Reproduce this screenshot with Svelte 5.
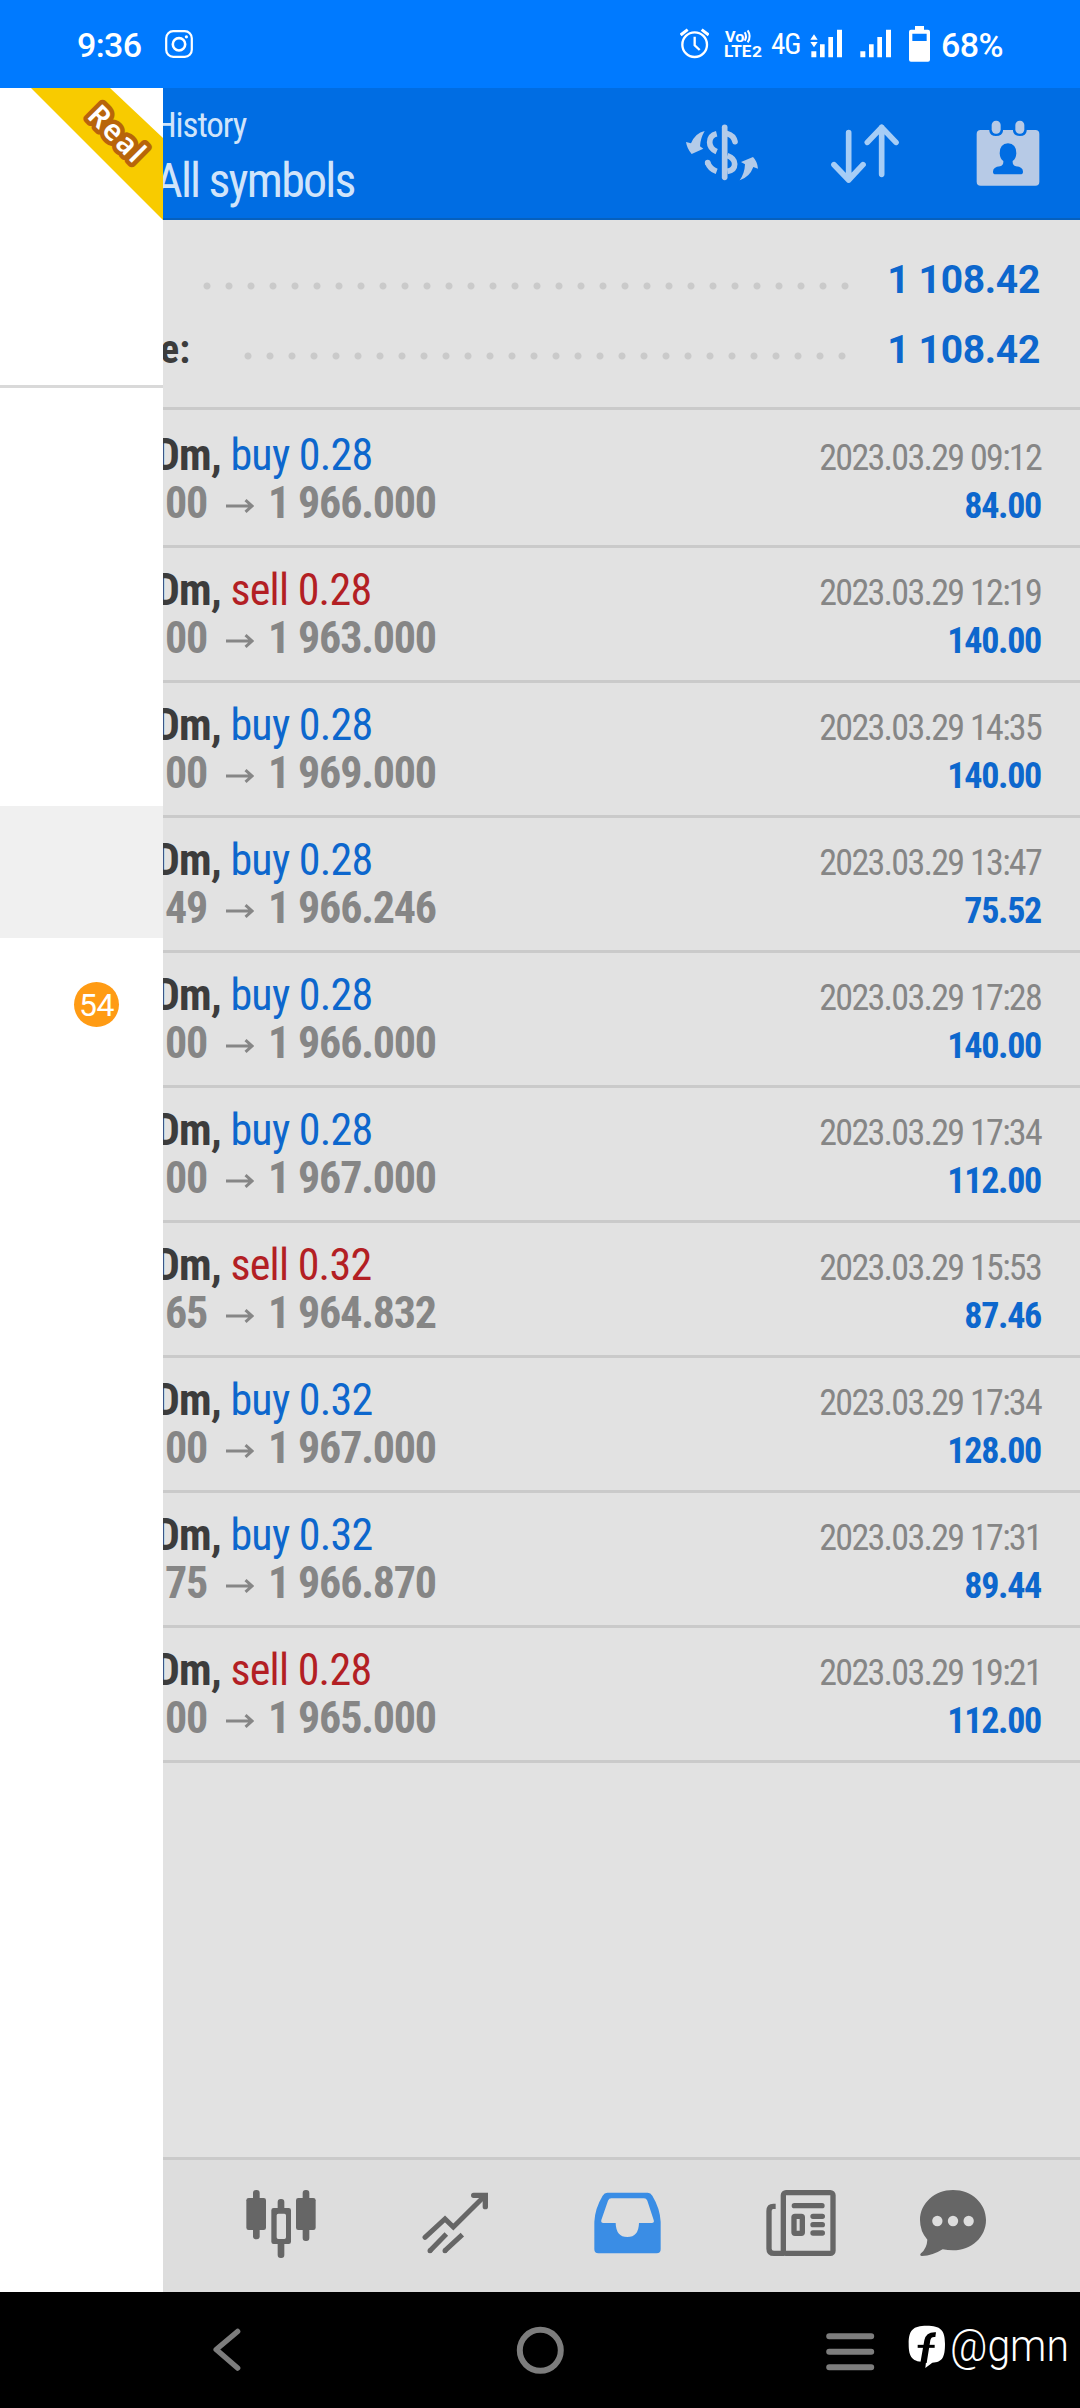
<script>
const deals = [
    { side: "buy", volume: "0.28", open: "00", close: "1 966.000", time: "2023.03.29 09:12", profit: "84.00" },
    { side: "sell", volume: "0.28", open: "00", close: "1 963.000", time: "2023.03.29 12:19", profit: "140.00" },
    { side: "buy", volume: "0.28", open: "00", close: "1 969.000", time: "2023.03.29 14:35", profit: "140.00" },
    { side: "buy", volume: "0.28", open: "49", close: "1 966.246", time: "2023.03.29 13:47", profit: "75.52" },
    { side: "buy", volume: "0.28", open: "00", close: "1 966.000", time: "2023.03.29 17:28", profit: "140.00" },
    { side: "buy", volume: "0.28", open: "00", close: "1 967.000", time: "2023.03.29 17:34", profit: "112.00" },
    { side: "sell", volume: "0.32", open: "65", close: "1 964.832", time: "2023.03.29 15:53", profit: "87.46" },
    { side: "buy", volume: "0.32", open: "00", close: "1 967.000", time: "2023.03.29 17:34", profit: "128.00" },
    { side: "buy", volume: "0.32", open: "75", close: "1 966.870", time: "2023.03.29 17:31", profit: "89.44" },
    { side: "sell", volume: "0.28", open: "00", close: "1 965.000", time: "2023.03.29 19:21", profit: "112.00" },
];
</script>

<div class="screen">
    <div class="status">
        <span class="clock">9:36</span>
        <svg class="insta" viewBox="0 0 28 28" fill="none" stroke="#fff">
            <rect x="1.2" y="1.2" width="25.6" height="25.6" rx="7" stroke-width="2.2" />
            <circle cx="14" cy="14.3" r="6.2" stroke-width="2.6" />
            <circle cx="21.4" cy="6.8" r="1.6" fill="#fff" stroke="none" />
        </svg>
        <svg class="alarm" viewBox="120 78 87 108" fill="none" stroke="#fff" stroke-width="7">
            <circle cx="164" cy="134" r="37" />
            <path d="M164 110V136L179 150" />
            <path d="M122 105L143 89M206 105L185 89" stroke-width="9" />
        </svg>
        <svg class="volte" viewBox="252 78 114 108">
            <text x="255" y="127" font-size="44" textLength="58" lengthAdjust="spacingAndGlyphs">Vo</text>
            <path d="M314 97Q322 110 314 122M323 91Q335 109 323 127" fill="none" stroke="#fff" stroke-width="6" />
            <text x="252" y="172" font-size="48" textLength="82" lengthAdjust="spacingAndGlyphs">LTE</text>
            <text x="336" y="172" font-size="44" textLength="30" lengthAdjust="spacingAndGlyphs">2</text>
        </svg>
        <span class="net">4G</span>
        <svg class="signal first" viewBox="510 78 99 108" fill="#fff">
            <path d="M522 103L533 119H511ZM522 142L533 126H511Z" />
            <path d="M514 154h15v18h-15zM540 133h14v39h-14zM565 111h14v61h-14zM591 89h15v83h-15z" />
        </svg>
        <svg class="signal" viewBox="657 78 99 108" fill="#fff">
            <path d="M661 154h15v18h-15zM687 133h14v39h-14zM712 111h14v61h-14zM738 89h15v83h-15z" />
        </svg>
        <svg class="battery" viewBox="807 78 63 108">
            <path fill="#fff" fill-rule="evenodd" d="M825 78h27v11h12q6 0 6 6v84q0 6-6 6h-51q-6 0-6-6v-84q0-6 6-6h12zM817 101v22h43v-22z" />
        </svg>
        <span class="percent">68%</span>
    </div>

    <div class="body">
        <div class="drawer">
            <div class="account">
                <svg class="ribbon" viewBox="0 0 163 132">
                    <path fill="#f8cb00" d="M31 0H110L163 50V132Z" />
                    <text transform="translate(86 29) rotate(45)" x="0" y="0">Real</text>
                </svg>
            </div>
            <div class="item selected"></div>
            <div class="item">
                <span class="badge">54</span>
            </div>
        </div>

        <div class="page">
            <header>
                <div class="titles">
                    <div class="title">History</div>
                    <div class="subtitle">All symbols</div>
                </div>
                <svg class="currency" viewBox="138 360 219 198" fill="#b3cbe9">
                    <path d="M138 426L153 430Q166 399 194 393Q181 415 180 439L190 446L155 462Q141 446 138 426Z" />
                    <path d="M354 506L340 501Q329 531 299 541Q314 520 315 493L303 486L339 471Q352 484 354 506Z" />
                    <g fill="none" stroke="#b3cbe9" stroke-width="17">
                        <path d="M254 382V532" stroke-linecap="round" />
                        <path d="M230 401Q209 406 209 427Q209 446 230 455" />
                        <path d="M262 401Q281 406 285 425" stroke-linecap="round" />
                        <path d="M262 467Q284 475 284 492Q284 511 262 514" />
                        <path d="M230 514Q210 507 203 488" />
                        <path d="M203 488v0" stroke-linecap="round" />
                    </g>
                </svg>
                <svg class="sort" viewBox="573 360 204 198" fill="none" stroke="#a6cdf6" stroke-width="17" stroke-linecap="round" stroke-linejoin="round">
                    <path d="M626 398V540M582 494L626 540L669 494" />
                    <path d="M725 523V382M682 427L725 382L768 427" />
                </svg>
                <svg class="calendar" viewBox="1008 360 192 198">
                    <path fill="#b7cae6" fill-rule="evenodd" d="M1022 390H1048V393Q1050 408 1068 408Q1087 408 1089 393V390H1119V393Q1121 408 1140 408Q1158 408 1160 393V390H1186Q1198 390 1198 402V545Q1198 557 1186 557H1022Q1010 557 1010 545V402Q1010 390 1022 390ZM1104 430Q1079 431 1079 460Q1080 477 1090 483Q1091 496 1080 499Q1059 501 1059 515Q1059 523 1067 523H1141Q1149 523 1149 515Q1149 501 1128 499Q1117 496 1118 483Q1128 477 1129 460Q1129 431 1104 430Z" />
                    <rect x="1055" y="362" width="27" height="39" rx="13" fill="#b7cae6" />
                    <rect x="1126" y="362" width="27" height="39" rx="13" fill="#b7cae6" />
                </svg>
            </header>

            <div class="summary">
                <div class="total">
                    <span class="label"></span>
                    <span class="dots"></span>
                    <span class="sum">1 108.42</span>
                </div>
                <div class="total balance">
                    <span class="label">e:</span>
                    <span class="dots"></span>
                    <span class="sum">1 108.42</span>
                </div>
            </div>

            <div class="deals">
                {#each deals as deal}
                <div class="deal">
                    <div class="line top">
                        <span class="symbol">Dm, <span class={deal.side}>{deal.side} {deal.volume}</span></span>
                        <span class="time">{deal.time}</span>
                    </div>
                    <div class="line">
                        <span class="prices">
                            <span>{deal.open}</span>
                            <svg class="arrow" viewBox="0 0 28 14" fill="none" stroke="#868686" stroke-width="3">
                                <path d="M0 7H26M19.5 1.2L26 7L19.5 12.8" />
                            </svg>
                            <span>{deal.close}</span>
                        </span>
                        <span class="profit">{deal.profit}</span>
                    </div>
                </div>
                {/each}
            </div>

            <div class="tabs">
                <svg width="71" viewBox="318 150 213 204" fill="#666">
                    <rect x="339" y="150" width="20" height="148" rx="9" />
                    <rect x="319" y="174" width="59" height="96" rx="7" />
                    <rect x="488" y="150" width="20" height="153" rx="9" />
                    <rect x="468" y="174" width="59" height="96" rx="7" />
                    <rect x="413" y="177" width="20" height="40" rx="9" />
                    <rect x="413" y="300" width="20" height="54" rx="9" />
                    <path fill-rule="evenodd" d="M401 204h45q7 0 7 7v94q0 7-7 7h-45q-7 0-7-7v-94q0-7 7-7zM415 221q-5 0-5 5v66q0 5 5 5h18q5 0 5-5v-66q0-5-5-5z" />
                </svg>
                <svg width="67" viewBox="843 150 201 204" fill="none" stroke="#666" stroke-width="15">
                    <path d="M852 292L912 237L937 261L1030 169" stroke-linecap="round" />
                    <path d="M998 166H1033V200" stroke-linecap="round" stroke-width="16" />
                    <path d="M916 282L867 332M964 284L912 332" />
                    <path d="M867 332v0M912 332v0" stroke-linecap="round" />
                </svg>
                <svg width="67" viewBox="42 150 201 204">
                    <path fill="#3a8de5" fill-rule="evenodd" d="M82 158H203Q212 158 217 167Q240 205 242 245V328Q242 340 230 340H55Q43 340 43 328V245Q45 205 68 167Q73 158 82 158ZM94 175Q87 175 84 182L64 240Q62 249 70 249H107Q108 291 142 291Q176 291 177 249H215Q224 249 221 240L202 182Q199 175 192 175Z" />
                </svg>
                <svg width="70" viewBox="558 150 210 204" fill="none" stroke="#666" stroke-width="16">
                    <rect x="610" y="158" width="149" height="182" rx="8" />
                    <path d="M587 199H580Q567 199 567 213V326Q567 340 582 340H612" />
                    <path d="M643 197H726M699 229H727M699 254H727M699 279H727" stroke-linecap="round" />
                    <rect x="642" y="229" width="25" height="51" rx="3" />
                </svg>
                <svg class="chat" width="68" viewBox="1017 150 204 204">
                    <path fill="#666" d="M1119 150C1175 150 1218 190 1218 240C1218 291 1175 331 1119 331Q1103 331 1088 328Q1058 347 1026 348Q1017 347 1023 340Q1041 324 1042 299Q1020 274 1020 240C1020 190 1064 150 1119 150Z" />
                    <circle cx="1072" cy="243" r="15.5" fill="#ddd" />
                    <circle cx="1119" cy="243" r="15.5" fill="#ddd" />
                    <circle cx="1166" cy="243" r="15.5" fill="#ddd" />
                </svg>
            </div>
        </div>
    </div>

    <div class="nav">
        <svg class="back" viewBox="0 0 28 44" fill="none" stroke="#7d7d7d" stroke-width="5.5" stroke-linecap="round" stroke-linejoin="round">
            <path d="M24.6 3.5L3.2 21.5L24.6 40" />
        </svg>
        <svg class="home" viewBox="0 0 48 48" fill="none" stroke="#7d7d7d" stroke-width="6">
            <circle cx="24.3" cy="24.3" r="20.5" />
        </svg>
        <svg class="menu" viewBox="0 0 49 38" fill="none" stroke="#7d7d7d" stroke-width="6" stroke-linecap="round">
            <path d="M3.2 3.2H45.2M3.2 18.7H45.2M3.2 34.2H45.2" />
        </svg>
        <svg class="logo" viewBox="987 563 114 132">
            <path fill="#fff" d="M1043 565C1085 565 1098 578 1098 619C1098 660 1090 674 1060 676L1039 692L1041 674C1000 674 989 660 989 619C989 578 1002 565 1043 565Z" />
            <path fill="#000" d="M1071 585L1069 599Q1056 597 1054 609L1043 677H1024L1036 609Q1041 583 1071 585Z" />
            <path fill="none" stroke="#000" stroke-width="9" d="M1016 627H1067" />
        </svg>
        <span class="handle">@gmn</span>
    </div>
</div>

<style>
    :global(body) {
        background: #000;
    }
    .screen {
        width: 1080px;
        height: 2408px;
        display: flex;
        flex-direction: column;
        overflow: hidden;
        font-family: "Roboto Condensed", Roboto, sans-serif;
        font-stretch: 75%;
        white-space: nowrap;
    }
    svg {
        display: block;
        flex: none;
    }
    .status {
        height: 88px;
        display: flex;
        align-items: center;
        box-sizing: border-box;
        padding: 0 78px 0 77px;
        background: #007aff;
        color: white;
        font-family: Roboto, sans-serif;
        font-stretch: 100%;
        font-weight: 500;
        font-size: 34px;
        letter-spacing: -0.6px;
    }
    .clock {
        width: 88px;
        padding-top: 2px;
    }
    .insta {
        width: 28px;
        height: 28px;
    }
    .alarm {
        width: 29px;
        height: 36px;
        margin-left: auto;
    }
    .volte {
        width: 38px;
        height: 36px;
        margin-left: 15px;
        fill: white;
        font-weight: 700;
        letter-spacing: 0;
    }
    .net {
        width: 39px;
        margin-left: 9px;
        font-family: "Roboto Condensed", Roboto, sans-serif;
        font-stretch: 75%;
        font-weight: 400;
        font-size: 29px;
        letter-spacing: -1px;
    }
    .signal {
        width: 33px;
        height: 36px;
        margin-right: 17px;
    }
    .signal.first {
        margin-right: 16px;
    }
    .battery {
        width: 21px;
        height: 36px;
    }
    .percent {
        width: 61px;
        margin-left: 11px;
        padding-top: 2px;
    }
    .body {
        height: 2204px;
        display: flex;
    }
    .drawer {
        width: 163px;
        flex: none;
        background: white;
    }
    .account {
        height: 297px;
        border-bottom: 3px solid #d9d9d9;
        margin-bottom: 418px;
    }
    .ribbon {
        width: 163px;
        height: 132px;
    }
    .ribbon text {
        font-family: "Noto Sans", sans-serif;
        font-weight: 600;
        font-size: 29px;
        letter-spacing: 2px;
        fill: white;
        stroke: #b8650a;
        stroke-width: 9px;
        stroke-linejoin: round;
        paint-order: stroke;
    }
    .item {
        height: 132px;
        display: flex;
        align-items: center;
    }
    .selected {
        background: #f0f0f0;
    }
    .badge {
        width: 45px;
        height: 45px;
        line-height: 46px;
        margin-left: 74px;
        border-radius: 50%;
        background: #ff9b14;
        color: white;
        text-align: center;
        font-family: Roboto, sans-serif;
        font-stretch: 100%;
        font-size: 32px;
        letter-spacing: -0.5px;
    }
    .page {
        flex: 1;
        min-width: 0;
        display: flex;
        flex-direction: column;
        overflow: hidden;
        background: #e2e2e2;
    }
    header {
        height: 132px;
        box-sizing: border-box;
        border-bottom: 2px solid #0660bd;
        display: flex;
        align-items: center;
        padding-right: 40px;
        background: #006de3;
        color: #d0e4fa;
    }
    .titles {
        flex: 1;
        margin-left: -8px;
        padding-top: 5px;
    }
    .title {
        font-size: 35px;
        line-height: 50px;
        letter-spacing: -1.1px;
    }
    .subtitle {
        font-size: 48px;
        line-height: 60px;
        letter-spacing: -1.8px;
    }
    .currency {
        width: 73px;
        height: 66px;
    }
    .sort {
        width: 68px;
        height: 66px;
        margin: 0 77px 0 72px;
    }
    .calendar {
        width: 64px;
        height: 66px;
    }
    .summary {
        height: 190px;
        box-sizing: border-box;
        border-bottom: 3px solid #cacaca;
        padding: 24px 40px 0 0;
    }
    .total {
        height: 70px;
        display: flex;
        align-items: center;
    }
    .label {
        width: 33px;
        box-sizing: border-box;
        font-weight: 700;
        font-size: 40px;
        color: #3c3c3c;
    }
    .balance .label {
        width: 74px;
        text-indent: -3px;
    }
    .dots {
        width: 660px;
        height: 10px;
        margin-top: 14px;
        background: radial-gradient(circle, #cacaca 3px, transparent 4px) 0 0 / 22px 10px;
    }
    .balance .dots {
        width: 616px;
    }
    .sum {
        flex: 1;
        padding-top: 2px;
        text-align: right;
        font-family: Roboto, sans-serif;
        font-stretch: 100%;
        font-weight: 700;
        font-size: 39px;
        letter-spacing: -0.3px;
        color: #0d67cd;
    }
    .deals {
        flex: 1;
        padding-top: 3px;
    }
    .deal {
        height: 135px;
        box-sizing: border-box;
        border-bottom: 3px solid #cacaca;
        padding: 18px 39px 0 0;
    }
    .line {
        height: 48px;
        line-height: 48px;
        display: flex;
        align-items: baseline;
        justify-content: space-between;
    }
    .symbol {
        margin-left: -8px;
        font-size: 44px;
        font-weight: 700;
        letter-spacing: -0.75px;
        color: #3c3c3c;
    }
    .buy, .sell {
        font-weight: 400;
        color: #0d67cd;
    }
    .sell {
        color: #b31f24;
    }
    .time {
        font-size: 36px;
        letter-spacing: -1.7px;
        color: #868686;
    }
    .prices {
        display: flex;
        align-items: center;
        margin-left: 2px;
        font-size: 44px;
        font-weight: 700;
        letter-spacing: -1.2px;
        color: #868686;
    }
    .arrow {
        width: 28px;
        height: 14px;
        margin: 6px 14px 0 19px;
    }
    .profit {
        font-size: 36px;
        font-weight: 700;
        letter-spacing: -1.3px;
        color: #0d67cd;
    }
    .tabs {
        height: 132px;
        border-top: 3px solid #cacaca;
        background: #ddd;
        display: flex;
        gap: 105px;
        padding-left: 83px;
    }
    .tabs svg {
        height: 68px;
        margin-top: 30px;
    }
    .tabs .chat {
        margin-left: -22px;
    }
    .nav {
        height: 116px;
        display: flex;
        align-items: center;
        background: black;
        color: white;
    }
    .back {
        width: 28px;
        height: 44px;
        margin-left: 213px;
    }
    .home {
        width: 48px;
        height: 48px;
        margin-left: 275px;
    }
    .menu {
        width: 49px;
        height: 38px;
        margin-left: 262px;
        margin-top: 4px;
    }
    .logo {
        width: 38px;
        height: 44px;
        margin: -6px 4px 0 33px;
    }
    .handle {
        font-family: Roboto, sans-serif;
        font-stretch: 100%;
        font-weight: 350;
        font-size: 44px;
        transform: scaleX(0.93);
        transform-origin: left;
        margin-top: -8px;
    }
</style>
